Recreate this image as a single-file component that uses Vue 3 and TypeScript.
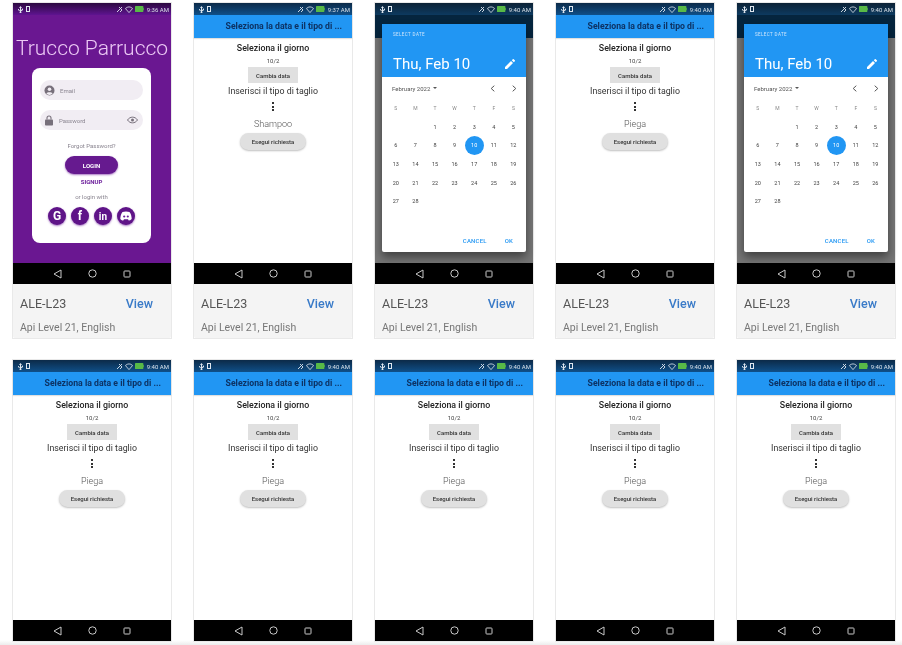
<script setup lang="ts">
type Screen = 'login' | 'form' | 'date'

interface Device {
  id: number
  screen: Screen
  time: string
  choice?: string
  footer: boolean
}

const devices: Device[] = [
  { id: 1, screen: 'login', time: '9:36 AM', footer: true },
  { id: 2, screen: 'form', time: '9:37 AM', choice: 'Shampoo', footer: true },
  { id: 3, screen: 'date', time: '9:40 AM', footer: true },
  { id: 4, screen: 'form', time: '9:40 AM', choice: 'Piega', footer: true },
  { id: 5, screen: 'date', time: '9:40 AM', footer: true },
  { id: 6, screen: 'form', time: '9:40 AM', choice: 'Piega', footer: false },
  { id: 7, screen: 'form', time: '9:40 AM', choice: 'Piega', footer: false },
  { id: 8, screen: 'form', time: '9:40 AM', choice: 'Piega', footer: false },
  { id: 9, screen: 'form', time: '9:40 AM', choice: 'Piega', footer: false },
  { id: 10, screen: 'form', time: '9:40 AM', choice: 'Piega', footer: false }
]

const weekDays = ['S', 'M', 'T', 'W', 'T', 'F', 'S']
// febbraio 2022 parte di martedì
const days: (number | null)[] = [null, null, ...Array.from({ length: 28 }, (_, i) => i + 1)]
</script>

<template>
  <main class="page">
    <article v-for="d in devices" :key="d.id" class="card">
      <div class="phone" :class="`phone-${d.screen}`">
        <div class="status">
          <span class="status-left">
            <svg width="5" height="7" viewBox="0 0 5 7"><path d="M2.500 0 4 2H3v2.200L4.200 3v-.4H5V4L3 5.400V6h.4v1H1.600V6H2v-.4L0 4V3h.8v.6L2 4.800V2H1z" fill="#dfe6ee"/></svg>
            <svg width="4" height="6" viewBox="0 0 4 6"><rect x=".5" y=".5" width="3" height="5" fill="none" stroke="#dfe6ee"/></svg>
          </span>
          <span class="status-right">
            <svg width="7" height="7" viewBox="0 0 7 7"><path d="M1 6 6 1M3 1l3 3-2 2" fill="none" stroke="#dfe6ee" stroke-width=".9"/></svg>
            <svg width="8" height="7" viewBox="0 0 8 7"><path d="M.4 2.500a5.400 5.400 0 0 1 7.200 0L4 6.600z" fill="none" stroke="#dfe6ee" stroke-width=".8"/></svg>
            <svg class="battery" width="9" height="6" viewBox="0 0 9 6"><rect width="8.300" height="6" rx=".6" fill="#58b947"/><rect x="8.300" y="1.800" width=".7" height="2.400" fill="#58b947"/></svg>
            <span class="clock">{{ d.time }}</span>
          </span>
        </div>

        <div class="content">
          <!-- login -->
          <section v-if="d.screen === 'login'" class="login">
            <h1 class="brand">Trucco Parrucco</h1>
            <div class="login-box">
              <div class="field">
                <svg width="11" height="11" viewBox="0 0 11 11"><circle cx="5.500" cy="5.500" r="5" fill="#77707b"/><circle cx="5.500" cy="4.300" r="1.800" fill="#f1edf3"/><path d="M2.300 8.300c1-1.500 5.400-1.500 6.400 0a4 4 0 0 1-6.400 0z" fill="#f1edf3"/></svg>
                <span>Email</span>
              </div>
              <div class="field">
                <svg width="10" height="11" viewBox="0 0 10 11"><rect x="1" y="4.500" width="8" height="6" rx=".8" fill="#77707b"/><path d="M3 4.500V3a2 2 0 0 1 4 0v1.500" fill="none" stroke="#77707b" stroke-width="1.100"/></svg>
                <span>Password</span>
                <svg class="eye" width="11" height="8" viewBox="0 0 11 8"><path d="M.5 4C3 .2 8 .2 10.500 4 8 7.800 3 7.800.5 4z" fill="none" stroke="#77707b" stroke-width="1"/><circle cx="5.500" cy="4" r="1.500" fill="#77707b"/></svg>
              </div>
              <p class="forgot">Forgot Password?</p>
              <button class="login-btn">LOGIN</button>
              <a class="signup">SIGNUP</a>
              <p class="or">or login with</p>
              <div class="socials">
                <span class="social"><span class="g">G</span></span>
                <span class="social"><span class="f">f</span></span>
                <span class="social"><span class="in">in</span></span>
                <span class="social">
                  <svg width="12" height="10" viewBox="0 0 12 10"><path d="M2.500 1C4.500.2 7.500.2 9.500 1 11 3 11.700 5.500 11.700 8c-1 1-2 1.500-3 1.600L8 8.300H4l-.7 1.300c-1 0-2-.6-3-1.600C.3 5.500 1 3 2.500 1z" fill="#fff"/><circle cx="4.200" cy="5.500" r="1.100" fill="#6a1b9a"/><circle cx="7.800" cy="5.500" r="1.100" fill="#6a1b9a"/></svg>
                </span>
              </div>
            </div>
          </section>

          <!-- form e date condividono la stessa app bar -->
          <section v-else class="form">
            <header class="appbar">Seleziona la data e il tipo di ...</header>
            <div v-if="d.screen === 'form'" class="form-body">
              <h2 class="day-title">Seleziona il giorno</h2>
              <p class="picked">10/2</p>
              <button class="flat-btn">Cambia data</button>
              <p class="cut-label">Inserisci il tipo di taglio</p>
              <span class="more"><i></i><i></i><i></i></span>
              <p class="choice">{{ d.choice }}</p>
              <button class="run-btn">Esegui richiesta</button>
            </div>
          </section>

          <div v-if="d.screen === 'date'" class="scrim">
            <div class="dialog">
              <div class="dialog-head">
                <p class="select-date">SELECT DATE</p>
                <div class="head-row">
                  <span class="big-date">Thu, Feb 10</span>
                  <svg width="10" height="10" viewBox="0 0 10 10"><path d="M0 10V8l6-6 2 2-6 6zM6.800 1.200 7.800.2a.6.6 0 0 1 .9 0l1.100 1.100a.6.6 0 0 1 0 .9l-1 1z" fill="#fff"/></svg>
                </div>
              </div>
              <div class="month-row">
                <span class="month">February 2022<i class="caret"></i></span>
                <span class="chevrons">
                  <svg width="5" height="7" viewBox="0 0 5 7"><path d="M4.300.7 1.200 3.500 4.300 6.300" fill="none" stroke="#555" stroke-width="1"/></svg>
                  <svg width="5" height="7" viewBox="0 0 5 7"><path d="M.7.7 3.800 3.500.7 6.300" fill="none" stroke="#555" stroke-width="1"/></svg>
                </span>
              </div>
              <div class="cal">
                <span v-for="(w, i) in weekDays" :key="i" class="week">{{ w }}</span>
                <span v-for="(n, i) in days" :key="`n${i}`" class="cell" :class="{ today: n === 10 }">{{ n }}</span>
              </div>
              <div class="actions">
                <span>CANCEL</span>
                <span>OK</span>
              </div>
            </div>
          </div>
        </div>

        <nav class="softkeys">
          <svg width="9" height="10" viewBox="0 0 9 10"><path d="M8 1v8L1 5z" fill="none" stroke="#c9c9c9" stroke-width="1"/></svg>
          <svg width="9" height="9" viewBox="0 0 9 9"><circle cx="4.500" cy="4.500" r="3.700" fill="none" stroke="#c9c9c9" stroke-width="1"/></svg>
          <svg width="8" height="8" viewBox="0 0 8 8"><rect x="1" y="1" width="6" height="6" rx=".7" fill="none" stroke="#c9c9c9" stroke-width="1"/></svg>
        </nav>
      </div>

      <footer v-if="d.footer" class="info">
        <div class="info-top">
          <span class="model">ALE-L23</span>
          <a class="view">View</a>
        </div>
        <p class="api">Api Level 21, English</p>
      </footer>
    </article>
  </main>
</template>

<style scoped>
.page {
  width: 902px;
  height: 645px;
  box-sizing: border-box;
  padding: 3px 6px 0 13px;
  overflow: hidden;
  display: grid;
  grid-template-columns: repeat(5, 158px);
  grid-template-rows: 335px 281px;
  column-gap: 23px;
  row-gap: 22px;
  background: linear-gradient(#fff 640px, #ececec 645px);
  font-family: Roboto, "Liberation Sans", sans-serif;
  filter: blur(0.4px);
}
p, h1, h2 { margin: 0; }
button { font-family: inherit; border: 0; padding: 0; }

.card {
  display: flex;
  flex-direction: column;
  width: 158px;
  box-shadow: 0 0 0 1px #e9e9e9;
}

.phone {
  height: 281px;
  display: flex;
  flex-direction: column;
  background: #fff;
}

.status {
  height: 12px;
  flex: none;
  display: flex;
  align-items: center;
  justify-content: space-between;
  padding: 0 2px 0 5px;
  background: linear-gradient(#0c2a48, #0f4f88);
}
.phone-login .status { background: linear-gradient(#2c0a40, #5f1490); }
.phone-date .status { background: linear-gradient(#0c2236, #0d3a60); }

.status-left, .status-right { display: flex; align-items: center; gap: 3px; }
.status-right { gap: 2px; }
.clock { font-size: 6px; color: #d8e0e8; margin-left: 1px; }

.content {
  position: relative;
  flex: 1;
  min-height: 0;
}

.softkeys {
  height: 21px;
  flex: none;
  background: #000;
  display: grid;
  grid-template-columns: 35px 35px 35px;
  justify-content: center;
  justify-items: center;
  align-items: center;
}

/* login */
.login {
  height: 100%;
  background: #6a1791;
  display: flex;
  flex-direction: column;
  align-items: center;
}
.brand {
  margin-top: 20px;
  height: 33px;
  line-height: 26px;
  font-size: 21px;
  font-weight: 300;
  color: #ecc9f5;
  white-space: nowrap;
}
.login-box {
  width: 119px;
  height: 175px;
  box-sizing: border-box;
  margin-right: 1px;
  padding-top: 12px;
  background: #fff;
  border-radius: 8px;
  display: flex;
  flex-direction: column;
  align-items: center;
}
.field {
  width: 103px;
  height: 20px;
  flex: none;
  box-sizing: border-box;
  margin-bottom: 10px;
  padding: 0 5px 0 4px;
  background: #f1edf3;
  border-radius: 10px;
  display: flex;
  align-items: center;
  gap: 5px;
  font-size: 6px;
  color: #8a8590;
}
.eye { margin-left: auto; }
.forgot { margin-top: 2px; font-size: 6px; line-height: 8px; color: #8a8590; }
.login-btn {
  width: 53px;
  height: 18px;
  margin-top: 6px;
  border-radius: 9px;
  background: #661a8f;
  color: #fff;
  font-size: 6px;
  font-weight: 700;
  box-shadow: 0 1px 2px rgba(106, 27, 154, 0.6);
}
.signup { margin-top: 4px; font-size: 6px; font-weight: 700; line-height: 8px; color: #6a1b9a; }
.or { margin-top: 7px; font-size: 6px; line-height: 8px; color: #8a8590; }
.socials { display: flex; gap: 5px; margin-top: 6px; }
.social {
  width: 18px;
  height: 18px;
  border-radius: 50%;
  background: #5f1488;
  color: #fff;
  display: flex;
  align-items: center;
  justify-content: center;
  font-weight: 700;
  box-shadow: 0 1px 2px rgba(106, 27, 154, 0.6);
}
.g, .f { font-size: 12px; }
.in { font-size: 10px; }

/* form */
.form { height: 100%; display: flex; flex-direction: column; }
.appbar {
  height: 23px;
  flex: none;
  box-sizing: border-box;
  padding: 0 10px 1px 0;
  display: flex;
  align-items: center;
  justify-content: flex-end;
  background: #2196f3;
  color: #0d3263;
  font-size: 8.700px;
  font-weight: 700;
  white-space: nowrap;
  box-shadow: 0 1px 1px rgba(0, 0, 0, 0.12);
}
.form-body {
  padding-top: 4px;
  display: flex;
  flex-direction: column;
  align-items: center;
  color: #222;
}
.day-title { font-size: 8.800px; font-weight: 500; line-height: 12px; }
.picked { margin-top: 3px; font-size: 6px; line-height: 8px; color: #444; }
.flat-btn {
  width: 50px;
  height: 16px;
  margin-top: 2px;
  background: #e0e0e0;
  color: #333;
  font-size: 6px;
  font-weight: 500;
}
.cut-label { margin-top: 2px; font-size: 8.800px; line-height: 13px; color: #333; }
.more {
  height: 9px;
  margin-top: 4px;
  display: flex;
  flex-direction: column;
  justify-content: space-between;
}
.more i { width: 2px; height: 2px; background: #333; }
.choice { margin-top: 7px; font-size: 9px; font-weight: 300; line-height: 12px; color: #555; }
.run-btn {
  width: 66px;
  height: 17px;
  margin-top: 3px;
  border-radius: 8.500px;
  background: #e0e0e0;
  color: #333;
  font-size: 6px;
  font-weight: 500;
  box-shadow: 0 1px 2px rgba(0, 0, 0, 0.25);
}

/* date picker sopra il form */
.scrim {
  position: absolute;
  inset: 0;
  background: rgba(0, 0, 0, 0.54);
  display: flex;
  justify-content: center;
  padding-top: 9px;
}
.phone-date .appbar { box-shadow: none; color: transparent; background: #0d5288; }
.phone-date .form { background: #fff; }
.dialog {
  width: 144px;
  height: 228px;
  background: #fff;
  border-radius: 2px;
  display: flex;
  flex-direction: column;
  box-shadow: 0 5px 10px rgba(0, 0, 0, 0.45);
}
.dialog-head {
  height: 53px;
  flex: none;
  box-sizing: border-box;
  padding: 7px 11px 0 11px;
  background: #2196f3;
  color: #fff;
}
.select-date { font-size: 4.500px; letter-spacing: 0.4px; line-height: 8px; color: #cfe6fb; }
.head-row {
  margin-top: 16px;
  display: flex;
  align-items: center;
  justify-content: space-between;
}
.big-date { font-size: 15px; line-height: 18px; }
.month-row {
  height: 22px;
  flex: none;
  padding: 0 9px 0 10px;
  display: flex;
  align-items: center;
  justify-content: space-between;
  font-size: 6px;
  color: #555;
}
.month { display: flex; align-items: center; gap: 3px; }
.caret {
  width: 0;
  height: 0;
  border: 2px solid transparent;
  border-top: 2.500px solid #555;
  border-bottom: 0;
}
.chevrons { display: flex; gap: 17px; }
.cal {
  padding: 0 4px;
  display: grid;
  grid-template-columns: repeat(7, 19.6px);
  grid-auto-rows: 18.600px;
  justify-items: center;
  align-items: center;
  font-size: 5.500px;
  color: #444;
}
.week { color: #888; font-size: 5px; }
.cell {
  width: 19px;
  height: 19px;
  display: flex;
  align-items: center;
  justify-content: center;
}
.today { border-radius: 50%; background: #2196f3; color: #fff; }
.actions {
  margin-top: auto;
  height: 24px;
  padding-right: 13px;
  display: flex;
  justify-content: flex-end;
  align-items: center;
  gap: 18px;
  font-size: 6px;
  font-weight: 500;
  letter-spacing: 0.2px;
  color: #2196f3;
}

/* riga sotto al telefono */
.info {
  height: 54px;
  box-sizing: border-box;
  padding: 12px 18px 0 7px;
  background: #f4f4f4;
  border-radius: 0 0 2px 2px;
}
.info-top {
  display: flex;
  justify-content: space-between;
  align-items: center;
  font-size: 12.500px;
  line-height: 16px;
}
.model { color: #555; }
.view { color: #3a7bc8; font-weight: 500; }
.api { margin-top: 9px; font-size: 10.500px; line-height: 13px; color: #777; }
</style>
